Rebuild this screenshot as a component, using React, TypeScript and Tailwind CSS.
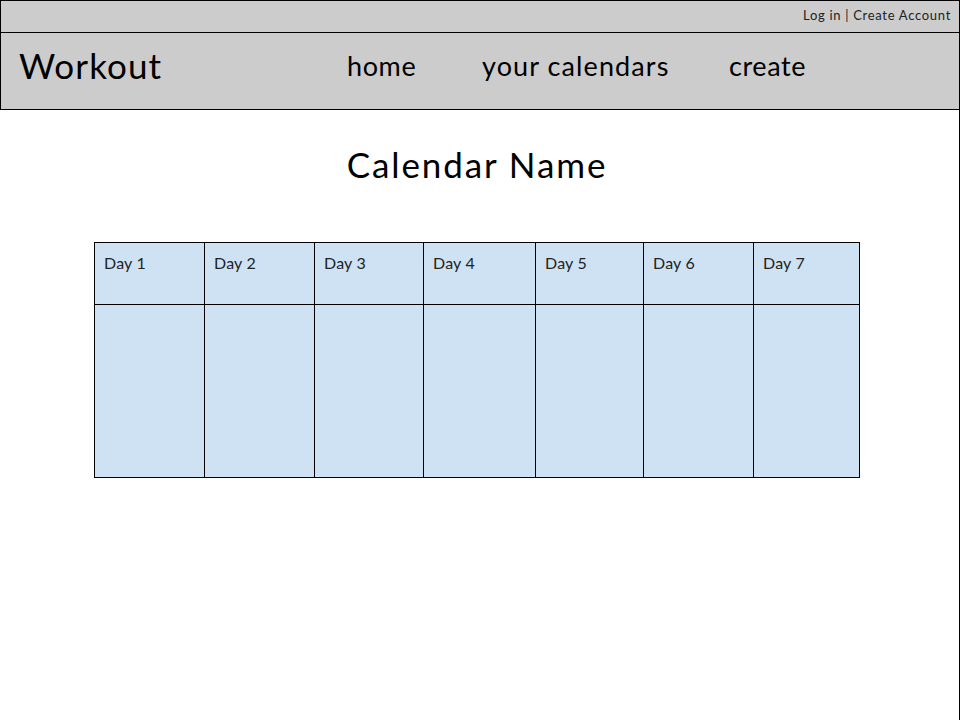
const days = ["Day 1", "Day 2", "Day 3", "Day 4", "Day 5", "Day 6", "Day 7"];

export default function App() {
  return (
    <div
      className="min-h-screen w-[960px] bg-white text-black"
      style={{ fontFamily: "Lato, 'Noto Sans', sans-serif" }}
    >
      {/* top strip */}
      <div className="h-[33px] bg-[#cccccc] border border-black flex items-center justify-end pr-[8px] pb-[2px]">
        <span className="text-[13px] text-[#222] tracking-[0.7px]">Log in | Create Account</span>
      </div>

      {/* main nav */}
      <div className="h-[77px] bg-[#cccccc] border-x border-b border-black flex items-center pb-[12px]">
        <div className="w-[346px] pl-[18px] text-[35px] leading-none tracking-[1.1px]">Workout</div>
        <div className="flex items-center text-[27px] leading-none tracking-[0.6px]">
          <span className="w-[135px]">home</span>
          <span className="w-[247px] tracking-[1.1px]">your calendars</span>
          <span>create</span>
        </div>
      </div>

      {/* content */}
      <div className="min-h-[610px] border-r border-black">
        <div className="ml-[94px] w-[766px]">
          <h1 className="pt-[34px] text-center text-[35px] leading-[40px] tracking-[1.9px]">Calendar Name</h1>
          <div className="mt-[58px] grid grid-cols-[110px_110px_109px_112px_108px_110px_105px] border border-black bg-[#cfe2f3]">
            {days.map((d, i) => (
              <div key={d} className={i < 6 ? "border-r border-black" : ""}>
                <div className="h-[62px] border-b border-black px-[9px] pt-[8px] text-[16px] text-[#222] tracking-[0.2px]">
                  {d}
                </div>
                <div className="h-[172px]" />
              </div>
            ))}
          </div>
        </div>
      </div>
    </div>
  );
}
